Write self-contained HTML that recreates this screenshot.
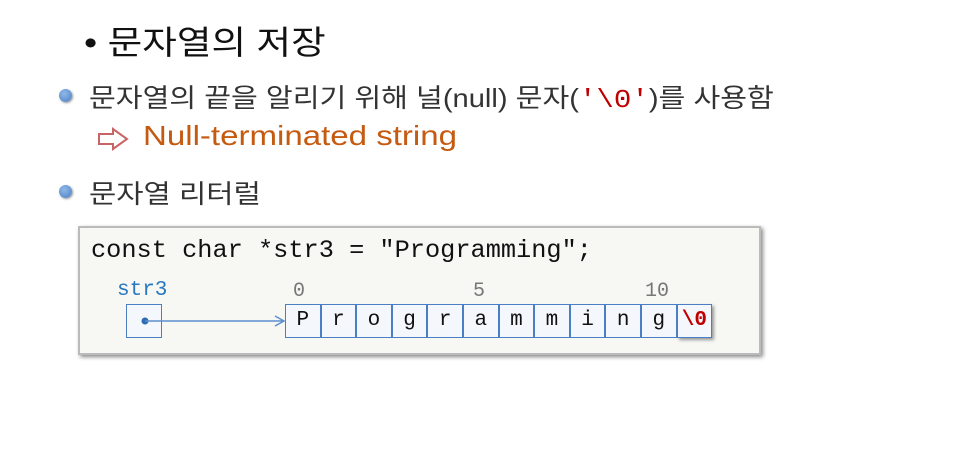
<!DOCTYPE html>
<html><head><meta charset="utf-8"><style>
body{margin:0;width:959px;height:471px;background:#fff;position:relative;overflow:hidden;font-family:"Liberation Sans","Noto Sans CJK KR",sans-serif}
.a{position:absolute;white-space:nowrap}
.s{transform-origin:0 0}
.dot{position:absolute;width:13px;height:13px;border-radius:50%;background:radial-gradient(circle at 40% 35%,#8fb8e8,#4a7fc4);box-shadow:1px 1px 2px #999}
.mono{font-family:"Liberation Mono","DejaVu Sans Mono",monospace}
.cell{position:absolute;top:304px;width:35.6px;height:34px;box-sizing:border-box;border:1px solid #4a7fc4;background:#f4f8fc;font-size:21px;text-align:center;line-height:32px;color:#111}
</style></head><body>
<div class="a s" style="left:84px;top:16px;font-size:33px;color:#111;transform:scaleX(1.14)">• 문자열의 저장</div>
<div class="dot" style="left:59px;top:89px"></div>
<div class="a s" style="left:89px;top:78px;font-size:26px;color:#333;transform:scaleX(1.12)">문자열의 끝을 알리기 위해 널(null) 문자(<span class="mono" style="color:#c00000">'\0'</span>)를 사용함</div>
<svg class="a" style="left:96px;top:126px" width="36" height="26"><path d="M3 8 H17 V3 L31 13 L17 23 V18 H3 Z" fill="#fff" stroke="#c86464" stroke-width="2"/></svg>
<div class="a s" style="left:143px;top:120px;font-size:28px;color:#c55a11;transform:scaleX(1.18)">Null-terminated string</div>
<div class="dot" style="left:59px;top:185px"></div>
<div class="a s" style="left:89px;top:174px;font-size:26px;color:#333;transform:scaleX(1.14)">문자열 리터럴</div>
<div class="a" style="left:78px;top:226px;width:683px;height:129px;box-sizing:border-box;border:2px solid #bbb;background:#f7f7f4;box-shadow:2px 2px 4px #888"></div>
<div class="a mono" style="left:91px;top:236px;font-size:25.3px;color:#111">const char *str3 = "Programming";</div>
<div class="a mono" style="left:117px;top:279px;font-size:21px;color:#2878c0">str3</div>
<div class="a mono" style="left:293px;top:280px;font-size:20px;color:#777">0</div>
<div class="a mono" style="left:473px;top:280px;font-size:20px;color:#777">5</div>
<div class="a mono" style="left:645px;top:280px;font-size:20px;color:#777">10</div>
<div class="a" style="left:126px;top:304px;width:36px;height:34px;box-sizing:border-box;border:1px solid #4a7fc4;background:#f4f8fc"></div>
<svg class="a" style="left:138px;top:312px" width="150" height="18"><circle cx="7" cy="9" r="3.5" fill="#2b6cb0"/><path d="M7 9 H145 M137 4 L146 9 L137 14" stroke="#5b8fd0" stroke-width="1.5" fill="none"/></svg>
<div class="mono">
<div class="cell" style="left:285px">P</div><div class="cell" style="left:320.6px">r</div><div class="cell" style="left:356.2px">o</div><div class="cell" style="left:391.8px">g</div><div class="cell" style="left:427.4px">r</div><div class="cell" style="left:463px">a</div><div class="cell" style="left:498.6px">m</div><div class="cell" style="left:534.2px">m</div><div class="cell" style="left:569.8px">i</div><div class="cell" style="left:605.4px">n</div><div class="cell" style="left:641px">g</div><div class="cell" style="left:676.6px;color:#c00000;font-weight:bold;box-shadow:2px 2px 3px #999">\0</div>
</div>
</body></html>
